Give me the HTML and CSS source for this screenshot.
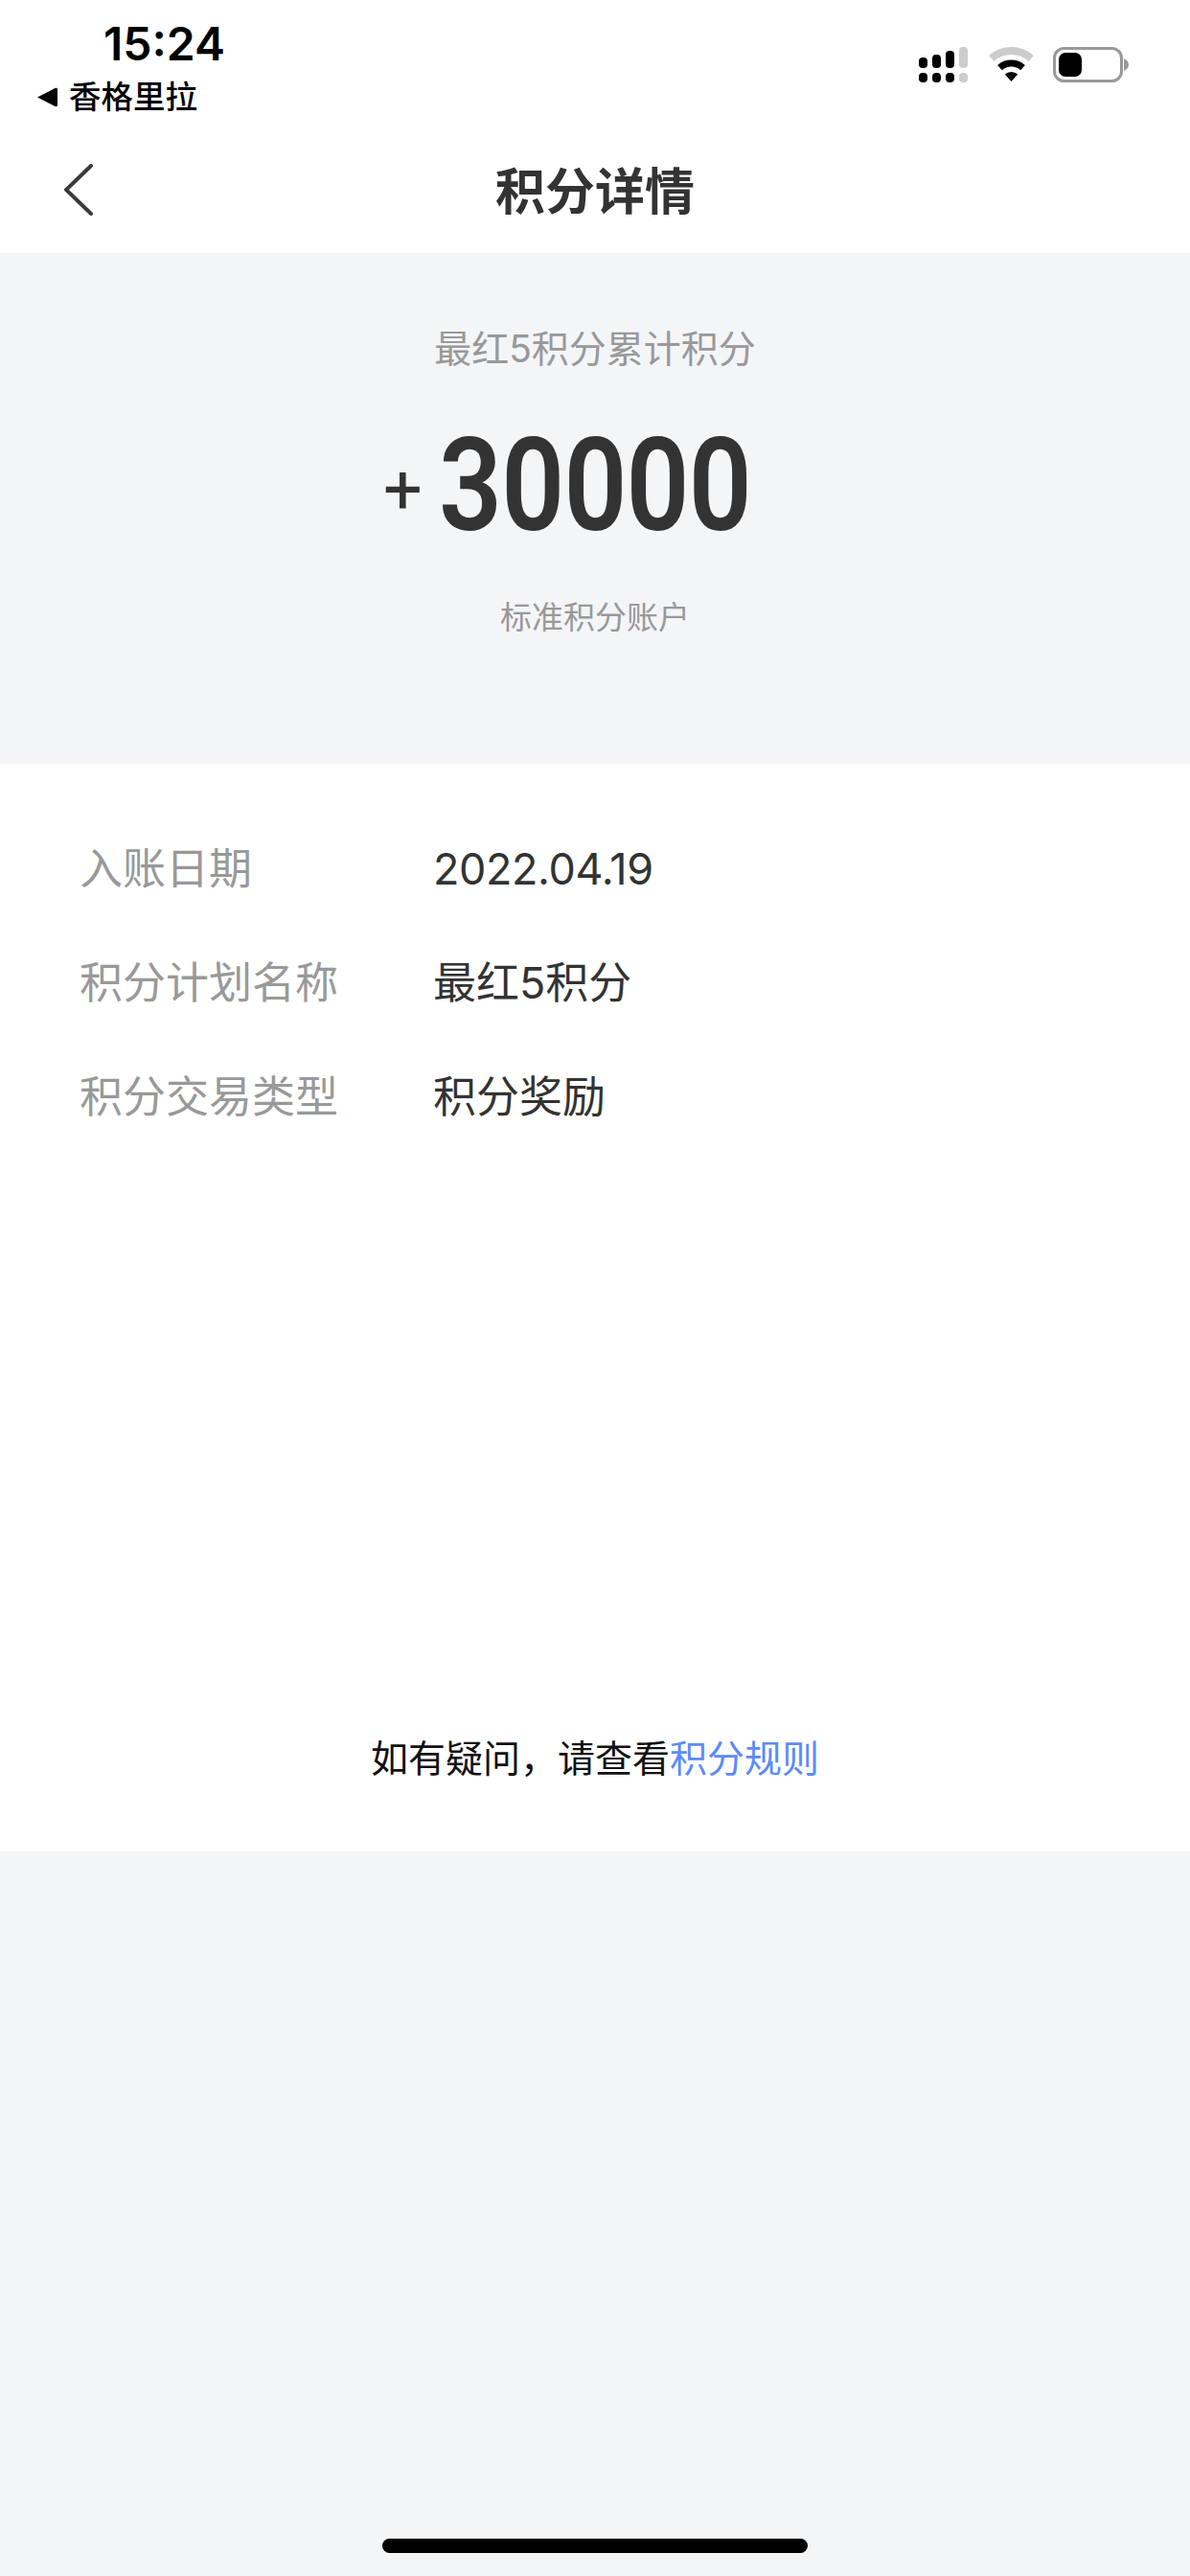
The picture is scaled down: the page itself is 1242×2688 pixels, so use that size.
FILE: index.html
```html
<!doctype html>
<html>
<head>
<meta charset="utf-8">
<title>积分详情</title>
<link rel="stylesheet" href="styles.css">
</head>

<body>
<div class="page">
	<div class="status">
		<div class="status-left">
			<div class="time">15:24</div>
			<div class="carrier">
				<svg class="carrier-arrow" width="22" height="21" viewBox="0 0 22 21"><path d="M1 10.500 L19.500 1 Q22 0 22 2.500 L22 18.500 Q22 21 19.500 20 Z" fill="#000"/></svg>
				<span>香格里拉</span>
			</div>
		</div>
		<div class="status-right">
			<svg class="icon-signal" width="51" height="37" viewBox="0 0 51 37">
				<rect x="0" y="11" width="9" height="11" rx="4" fill="#000"/>
				<rect x="14" y="8" width="9" height="14" rx="4" fill="#000"/>
				<rect x="28" y="4" width="9" height="18" rx="4" fill="#000"/>
				<rect x="42" y="0" width="9" height="22" rx="4" fill="#ccc"/>
				<rect x="0" y="27" width="9" height="10" rx="4" fill="#000"/>
				<rect x="14" y="27" width="9" height="10" rx="4" fill="#000"/>
				<rect x="28" y="27" width="9" height="10" rx="4" fill="#000"/>
				<rect x="42" y="27" width="9" height="10" rx="4" fill="#ccc"/>
			</svg>
			<svg class="icon-wifi" width="47" height="37" viewBox="0 0 47 37">
				<path d="M2.800 12 A31 31 0 0 1 44.200 12" fill="none" stroke="#ccc" stroke-width="8"/>
				<path d="M11.500 21.600 A18 18 0 0 1 35.500 21.600" fill="none" stroke="#000" stroke-width="7"/>
				<path d="M23.500 36 L16.800 28.600 A10 10 0 0 1 30.200 28.600 Z" fill="#000"/>
			</svg>
			<svg width="80" height="37" viewBox="0 0 80 37">
				<rect x="1.500" y="1.500" width="70" height="34" rx="10" fill="none" stroke="#999" stroke-width="3"/>
				<rect x="6" y="6" width="24" height="25" rx="7" fill="#000"/>
				<path d="M74 12 L77 14 Q79 15.500 79 18.500 Q79 21.500 77 23 L74 25 Z" fill="#999"/>
			</svg>
		</div>
	</div>

	<div class="nav">
		<svg class="back" width="30" height="54" viewBox="0 0 30 54"><path d="M28 2 L2 27 L28 52" fill="none" stroke="#3a3a3a" stroke-width="4" stroke-linecap="round"/></svg>
		<div class="nav-title">积分详情</div>
	</div>

	<div class="hero">
		<div class="hero-label">最红5积分累计积分</div>
		<div class="amount">
			<span class="plus">+</span><span class="num">30000</span>
		</div>
		<div class="hero-sub">标准积分账户</div>
	</div>

	<div class="detail">
		<ul class="rows">
			<li class="row"><span class="key">入账日期</span><span class="val tight">2022.04.19</span></li>
			<li class="row"><span class="key">积分计划名称</span><span class="val">最红5积分</span></li>
			<li class="row"><span class="key">积分交易类型</span><span class="val">积分奖励</span></li>
		</ul>
		<div class="rule">如有疑问，请查看<span class="rule-link">积分规则</span></div>
	</div>

	<div class="bottom">
		<div class="home-bar"></div>
	</div>
</div>
</body>
</html>
```

FILE: styles.css
```css
*{ margin: 0; padding: 0; list-style: none; box-sizing: border-box;}
body{ background: #fff; font-family: Inter, "Noto Sans CJK SC", sans-serif; color: #333;}
.page{ width: 1242px; height: 2688px; display: flex; flex-direction: column; overflow: hidden;}

.status{ height: 140px; display: flex; justify-content: space-between; padding: 0 63px 0 38px; color: #000;}
.status-left{ padding-top: 17px;}
.time{ font-size: 48px; line-height: 58px; font-weight: 600; padding-left: 70px;}
.carrier{ display: flex; align-items: center; gap: 12px; font-size: 33.500px; line-height: 46px; font-weight: 500; margin-top: 3px;}
.status-right{ display: flex; gap: 20px; padding-top: 49px; align-items: flex-start;}
.icon-signal{ margin-right: 2px;}

.nav{ height: 124px; display: flex; align-items: center; justify-content: center; position: relative; background: #fff;}
.back{ position: absolute; left: 67px; top: 31px;}
.nav-title{ font-size: 52px; line-height: 70px; font-weight: 700; color: #333; margin-bottom: 2px;}

.hero{ height: 533px; background: #f4f5f7; display: flex; flex-direction: column; align-items: center; padding-top: 73px;}
.hero-label{ font-size: 39px; line-height: 54px; color: #999;}
.amount{ display: flex; align-items: center; height: 150px; margin-top: 41px; color: #333;}
.plus{ font-family: Roboto, sans-serif; font-size: 72px; margin-top: 6px; margin-right: 17px;}
.num{ display: inline-block; width: 384px; font-family: Roboto, sans-serif; font-size: 136px; line-height: 150px; font-weight: 600; letter-spacing: -1px; transform: scaleX(.85); transform-origin: left center; white-space: nowrap;}
.hero-sub{ font-size: 33px; line-height: 46px; color: #999; margin-top: 39px;}

.detail{ height: 1135px; background: #fff; display: flex; flex-direction: column; justify-content: space-between; padding: 79px 0 70px;}
.rows{ display: flex; flex-direction: column; gap: 57px; padding-left: 83px;}
.row{ display: flex; font-size: 45px; line-height: 62px;}
.key{ width: 369px; color: #999;}
.val{ color: #333;}
.tight{ letter-spacing: -.4px;}
.rule{ text-align: center; font-size: 39px; line-height: 54px; color: #111;}
.rule-link{ color: #5b8bf7;}

.bottom{ flex: 1; background: #f4f5f7; display: flex; justify-content: center; align-items: flex-end; padding-bottom: 24px;}
.home-bar{ width: 444px; height: 15px; border-radius: 8px; background: #000;}
```
